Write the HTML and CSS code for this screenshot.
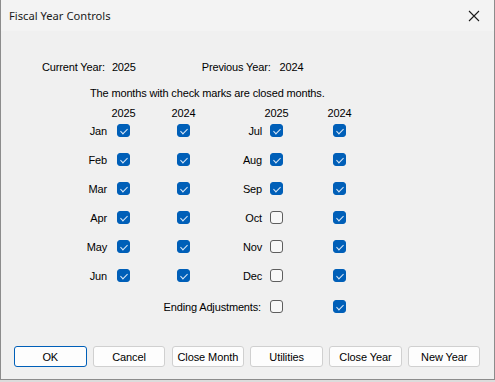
FILE: index.html
```html
<!DOCTYPE html>
<html lang="en">
<head>
    <meta charset="UTF-8">
    <title>Fiscal Year Controls</title>
    <link rel="stylesheet" href="styles.css">
</head>
<body>

<div class="window">
    <div class="titlebar">
        <span class="title">Fiscal Year Controls</span>
        <svg class="close" width="12" height="12" viewBox="0 0 12 12">
            <path d="M1 1 L11 11 M11 1 L1 11" stroke="#1a1a1a" stroke-width="1.1" fill="none"/>
        </svg>
    </div>

    <div class="years">
        <span class="cur-label">Current Year:</span>
        <span class="cur-val">2025</span>
        <span class="prev-label">Previous Year:</span>
        <span class="prev-val">2024</span>
    </div>

    <p class="note">The months with check marks are closed months.</p>

    <!-- column headers -->
    <div class="grid head">
        <span class="c3">2025</span>
        <span class="c5">2024</span>
        <span class="c8">2025</span>
        <span class="c10">2024</span>
    </div>

    <div class="grid months">
        <span class="lbl c1">Jan</span><span class="box on c3"></span><span class="box on c5"></span>
        <span class="lbl c6">Jul</span><span class="box on c8"></span><span class="box on c10"></span>

        <span class="lbl c1">Feb</span><span class="box on c3"></span><span class="box on c5"></span>
        <span class="lbl c6">Aug</span><span class="box on c8"></span><span class="box on c10"></span>

        <span class="lbl c1">Mar</span><span class="box on c3"></span><span class="box on c5"></span>
        <span class="lbl c6">Sep</span><span class="box on c8"></span><span class="box on c10"></span>

        <span class="lbl c1">Apr</span><span class="box on c3"></span><span class="box on c5"></span>
        <span class="lbl c6">Oct</span><span class="box c8"></span><span class="box on c10"></span>

        <span class="lbl c1">May</span><span class="box on c3"></span><span class="box on c5"></span>
        <span class="lbl c6">Nov</span><span class="box c8"></span><span class="box on c10"></span>

        <span class="lbl c1">Jun</span><span class="box on c3"></span><span class="box on c5"></span>
        <span class="lbl c6">Dec</span><span class="box c8"></span><span class="box on c10"></span>

        <span class="lbl ending end">Ending Adjustments:</span><span class="box c8 end"></span><span class="box on c10 end"></span>
    </div>

    <div class="buttons">
        <button class="default">OK</button>
        <button>Cancel</button>
        <button>Close Month</button>
        <button>Utilities</button>
        <button>Close Year</button>
        <button>New Year</button>
    </div>
</div>

</body>
</html>
```

FILE: styles.css
```css
:root {
    --body-bg: #f0f0f0;
    --title-bg: #f3f3f3;
    --frame: #8c8c8c;
    --check-blue: #005fb8;
    --text: #000;
}

* {
    margin: 0;
    padding: 0;
    box-sizing: border-box;
}

body {
    width: 495px;
    height: 382px;
    background: #dcdcdc;
    font-family: 'Liberation Sans', Arial, sans-serif;
    font-size: 11px;
    letter-spacing: -0.15px;
    color: var(--text);
    overflow: hidden;
}

.window {
    width: 495px;
    height: 380px;
    background: var(--body-bg);
    border-left: 1px solid var(--frame);
    border-right: 1px solid var(--frame);
    border-bottom: 1px solid var(--frame);
    display: flex;
    flex-direction: column;
}

.titlebar {
    height: 31px;
    background: var(--title-bg);
    display: flex;
    align-items: center;
    justify-content: space-between;
    padding: 0 14px 0 8px;
}

.title {
    font-family: 'Noto Sans', sans-serif;
    font-size: 11.2px;
    letter-spacing: 0;
    color: #1a1a1a;
}

.years {
    margin-top: 29px;
    height: 14px;
    line-height: 14px;
    display: flex;
}

.cur-label { margin-left: 41px; }
.cur-val { margin-left: 7px; }
.prev-label { margin-left: 66px; }
.prev-val { margin-left: 9px; }

.note {
    margin-top: 12px;
    margin-left: 89px;
    line-height: 14px;
}

.grid {
    display: grid;
    grid-template-columns: 106px 10px 13px 47px 13px 72px 8px 13px 50px 13px;
}

.head {
    margin-top: 6px;
    height: 14px;
    line-height: 14px;
}

.head span {
    display: flex;
    justify-content: center;
    white-space: nowrap;
}

.months {
    grid-auto-rows: 21px;
    row-gap: 8px;
    align-items: center;
}

.c1 { grid-column: 1; }
.c3 { grid-column: 3; }
.c5 { grid-column: 5; }
.c6 { grid-column: 6; }
.c8 { grid-column: 8; }
.c10 { grid-column: 10; }

.lbl {
    text-align: right;
    white-space: nowrap;
}

.ending {
    grid-column: 3 / 7;
    padding-right: 1px;
}

.end {
    margin-top: 4px;
}

.box {
    width: 13px;
    height: 13px;
    border: 1px solid #5e5e5e;
    border-radius: 3px;
    background: #f8f8f8;
    position: relative;
}

.box.on {
    background: var(--check-blue);
    border-color: var(--check-blue);
}

.box.on::after {
    content: "";
    position: absolute;
    left: 4px;
    top: 1.5px;
    width: 3px;
    height: 6px;
    border-right: 1px solid #dbe8f6;
    border-bottom: 1px solid #dbe8f6;
    transform: rotate(45deg);
}

.buttons {
    margin-top: auto;
    margin-bottom: 12px;
    padding-left: 13px;
    display: flex;
    gap: 6.3px;
}

.buttons button {
    width: 72.5px;
    height: 21px;
    font-family: 'Liberation Sans', Arial, sans-serif;
    font-size: 11px;
    letter-spacing: -0.1px;
    color: #000;
    background: #fdfdfd;
    border: 1px solid #d0d0d0;
    border-radius: 3px;
}

.buttons button.default {
    border-color: var(--check-blue);
}
```
